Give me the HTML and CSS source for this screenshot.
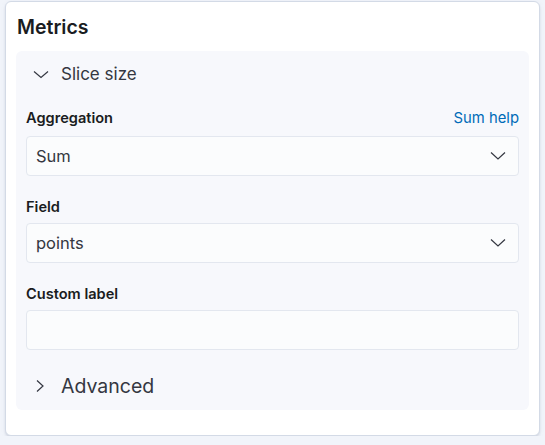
FILE: index.html
```html
<!DOCTYPE html>
<html>
<head>
<meta charset="utf-8">
<link rel="stylesheet" href="styles.css">
</head>
<body>
<div class="card">
  <h2 class="title">Metrics</h2>
  <div class="panel">
    <button class="acc-head">
      <svg class="chev" width="16" height="16" viewBox="0 0 16 16"><path d="M1 5.5 L8 11.5 L15 5.5" fill="none" stroke="#343741" stroke-width="1.2"/></svg>
      <span class="acc-title">Slice size</span>
    </button>
    <div class="acc-body">
      <div class="row">
        <div class="label-row label-row-link">
          <span class="label">Aggregation</span>
          <a class="help">Sum help</a>
        </div>
        <div class="select">
          <span class="value">Sum</span>
          <svg class="sel-chev" width="16" height="16" viewBox="0 0 16 16"><path d="M1 4.5 L8 11 L15 4.5" fill="none" stroke="#343741" stroke-width="1.2"/></svg>
        </div>
      </div>
      <div class="row row-gap">
        <div class="label-row"><span class="label">Field</span></div>
        <div class="select">
          <span class="value">points</span>
          <svg class="sel-chev" width="16" height="16" viewBox="0 0 16 16"><path d="M1 4.5 L8 11 L15 4.5" fill="none" stroke="#343741" stroke-width="1.2"/></svg>
        </div>
      </div>
      <div class="row row-gap">
        <div class="label-row"><span class="label">Custom label</span></div>
        <div class="select input"></div>
      </div>
    </div>
    <button class="acc-head acc-adv">
      <svg class="chev" width="16" height="16" viewBox="0 0 16 16"><path d="M4 2.5 L10 8 L4 13.5" fill="none" stroke="#343741" stroke-width="1.2"/></svg>
      <span class="acc-title acc-title-lg">Advanced</span>
    </button>
  </div>
</div>
</body>
</html>
```

FILE: styles.css
```css
* { box-sizing: border-box; }
html, body { margin: 0; padding: 0; }
body {
  background: #f1f4fa;
  font-family: Inter, "Noto Sans", sans-serif;
  color: #343741;
  padding-top: 1px;
}
.card {
  margin: 0 5px;
  height: 435px;
  background: #fff;
  border: 1px solid #d3dae6;
  border-radius: 6px;
  box-shadow: 0 2px 3px -1px rgba(152, 162, 179, 0.45), 0 1px 5px -2px rgba(152, 162, 179, 0.35);
  padding: 13px 10px 25px 10px;
}
.title {
  margin: 0 0 12px 1px;
  font-size: 19.5px;
  line-height: 24px;
  font-weight: 600;
  color: #1a1c21;
}
.panel {
  background: #f7f8fc;
  border-radius: 6px;
  padding: 0 10px 1px 10px;
}
.acc-head {
  display: flex;
  align-items: center;
  width: 100%;
  height: 46px;
  padding: 0 0 0 7px;
  margin: 0;
  border: 0;
  background: transparent;
  font-family: inherit;
  cursor: pointer;
  text-align: left;
}
.chev { flex: none; display: block; }
.acc-title {
  margin-left: 12px;
  font-size: 17px;
  color: #343741;
  line-height: 24px;
}
.acc-title-lg { font-size: 19.5px; }
.acc-body { padding-top: 9px; }
.label-row {
  display: flex;
  align-items: center;
  justify-content: space-between;
  height: 20px;
  margin-bottom: 6px;
}
.label-row-link { height: 24px; }
.label {
  font-size: 14.6px;
  font-weight: 600;
  color: #1a1c21;
  line-height: 20px;
}
.help {
  font-size: 14.8px;
  color: #006bb8;
  line-height: 20px;
}
.row-gap { margin-top: 21px; }
.select {
  height: 40px;
  background: #fbfcfd;
  border: 1px solid #e3e7ef;
  border-radius: 4px;
  display: flex;
  align-items: center;
  justify-content: space-between;
  padding: 0 12px 0 9px;
}
.input { margin-top: 1px; }
.value {
  font-size: 16.5px;
  color: #343741;
}
.sel-chev { display: block; }
.acc-adv { margin-top: 13px; }
```
